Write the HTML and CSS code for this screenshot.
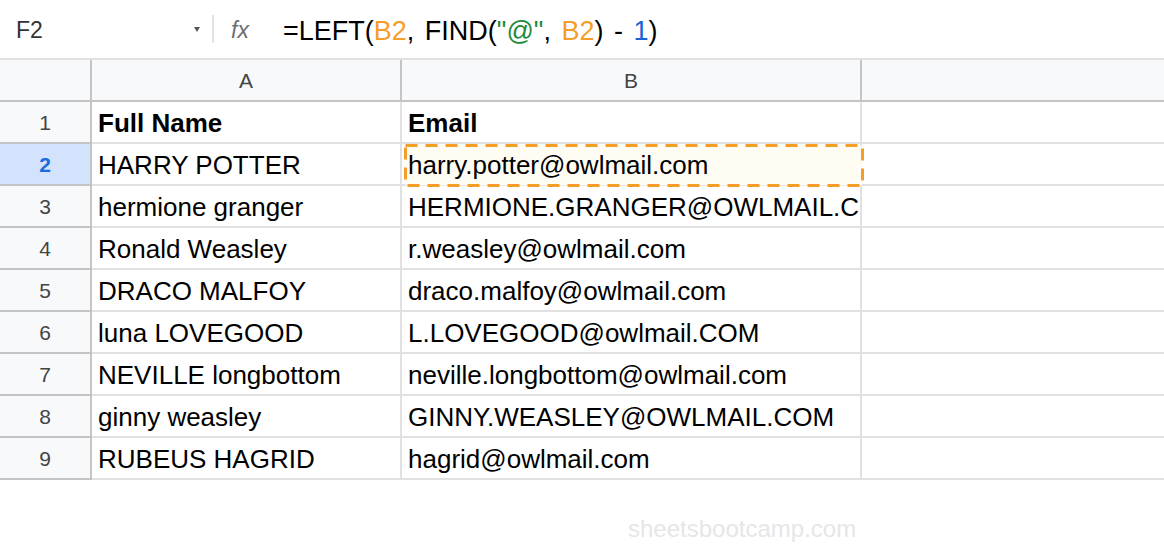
FILE: index.html
```html
<!DOCTYPE html>
<html>
<head>
<meta charset="utf-8">
<link rel="stylesheet" href="styles.css">
</head>
<body>
<div class="formula-bar">
  <div class="name-box">
    <span class="name">F2</span>
    <span class="caret"></span>
  </div>
  <div class="sep"></div>
  <div class="fx">fx</div>
  <div class="formula">=LEFT(<span class="ref">B2</span>, FIND(<span class="str">"@"</span>, <span class="ref">B2</span>) - <span class="num">1</span>)</div>
</div>
<div class="grid">
  <div class="corner"></div>
  <div class="colhead">A</div>
  <div class="colhead">B</div>
  <div class="colhead last"></div>

  <div class="rowhead">1</div>
  <div class="cell bold">Full Name</div>
  <div class="cell bold">Email</div>
  <div class="cell last"></div>

  <div class="rowhead active">2</div>
  <div class="cell">HARRY POTTER</div>
  <div class="cell selected"><svg class="sel" width="460" height="43" viewBox="0 0 460 43"><rect x="1.5" y="1.5" width="457" height="40" fill="#fffcf3" stroke="#f59d27" stroke-width="3" stroke-dasharray="12 8"/></svg><span class="seltext">harry.potter@owlmail.com</span></div>
  <div class="cell last"></div>

  <div class="rowhead">3</div>
  <div class="cell">hermione granger</div>
  <div class="cell">HERMIONE.GRANGER@OWLMAIL.COM</div>
  <div class="cell last"></div>

  <div class="rowhead">4</div>
  <div class="cell">Ronald Weasley</div>
  <div class="cell">r.weasley@owlmail.com</div>
  <div class="cell last"></div>

  <div class="rowhead">5</div>
  <div class="cell">DRACO MALFOY</div>
  <div class="cell">draco.malfoy@owlmail.com</div>
  <div class="cell last"></div>

  <div class="rowhead">6</div>
  <div class="cell">luna LOVEGOOD</div>
  <div class="cell">L.LOVEGOOD@owlmail.COM</div>
  <div class="cell last"></div>

  <div class="rowhead">7</div>
  <div class="cell">NEVILLE longbottom</div>
  <div class="cell">neville.longbottom@owlmail.com</div>
  <div class="cell last"></div>

  <div class="rowhead">8</div>
  <div class="cell">ginny weasley</div>
  <div class="cell">GINNY.WEASLEY@OWLMAIL.COM</div>
  <div class="cell last"></div>

  <div class="rowhead">9</div>
  <div class="cell">RUBEUS HAGRID</div>
  <div class="cell">hagrid@owlmail.com</div>
  <div class="cell last"></div>
</div>
<div class="watermark">sheetsbootcamp.com</div>
</body>
</html>
```

FILE: styles.css
```css
html, body {
  margin: 0;
  padding: 0;
  background: #ffffff;
}
body {
  width: 1164px;
  height: 546px;
  overflow: hidden;
  font-family: "Liberation Sans", Arial, sans-serif;
  color: #000;
}
.formula-bar {
  height: 58px;
  border-bottom: 2px solid #e1e1e1;
  display: flex;
  align-items: center;
}
.name-box {
  width: 212px;
  box-sizing: border-box;
  padding-left: 16px;
  padding-right: 12px;
  display: flex;
  align-items: center;
  justify-content: space-between;
}
.name {
  font-size: 23px;
  color: #333;
  margin-top: 3px;
}
.caret {
  width: 0;
  height: 0;
  border-left: 3px solid transparent;
  border-right: 3px solid transparent;
  border-top: 5px solid #555;
  margin-top: 1px;
}
.sep {
  width: 2px;
  height: 28px;
  background: #e3e3e3;
}
.fx {
  margin-left: 17px;
  margin-top: 2px;
  width: 52px;
  font-size: 23px;
  font-style: italic;
  color: #6f6f6f;
}
.formula {
  font-size: 27px;
  word-spacing: 3px;
  margin-top: 4px;
  color: #000;
  white-space: nowrap;
}
.ref { color: #f59d27; }
.str { color: #1e8a3c; }
.num { color: #1a62d6; }

.grid {
  display: grid;
  grid-template-columns: 92px 310px 460px 302px;
  grid-auto-rows: 42px;
}
.corner, .colhead, .rowhead, .cell {
  box-sizing: border-box;
  border-right: 2px solid #e1e1e1;
  border-bottom: 2px solid #e1e1e1;
}
.corner, .colhead {
  background: #f8f9fa;
  border-color: #c4c4c4;
}
.colhead {
  font-size: 21px;
  color: #444;
  text-align: center;
  line-height: 40px;
  padding-top: 1px;
}
.colhead.last { border-right: none; }
.rowhead {
  background: #f8f9fa;
  border-color: #c4c4c4;
  font-size: 21px;
  color: #444;
  text-align: center;
  line-height: 40px;
  padding-top: 1px;
}
.rowhead.active {
  background: #d3e3fd;
  color: #1a6ae0;
  font-weight: bold;
}
.cell {
  font-size: 26px;
  line-height: 40px;
  padding-top: 1px;
  padding-left: 6px;
  white-space: nowrap;
  overflow: hidden;
  position: relative;
}
.cell.last { border-right: none; }
.cell.bold { font-weight: bold; }
.cell.selected { overflow: visible; }
.sel {
  position: absolute;
  left: 2px;
  top: 0;
}
.seltext {
  position: relative;
}
.watermark {
  margin-top: 35px;
  padding-left: 628px;
  font-size: 24px;
  color: #e6e6e6;
}
```
